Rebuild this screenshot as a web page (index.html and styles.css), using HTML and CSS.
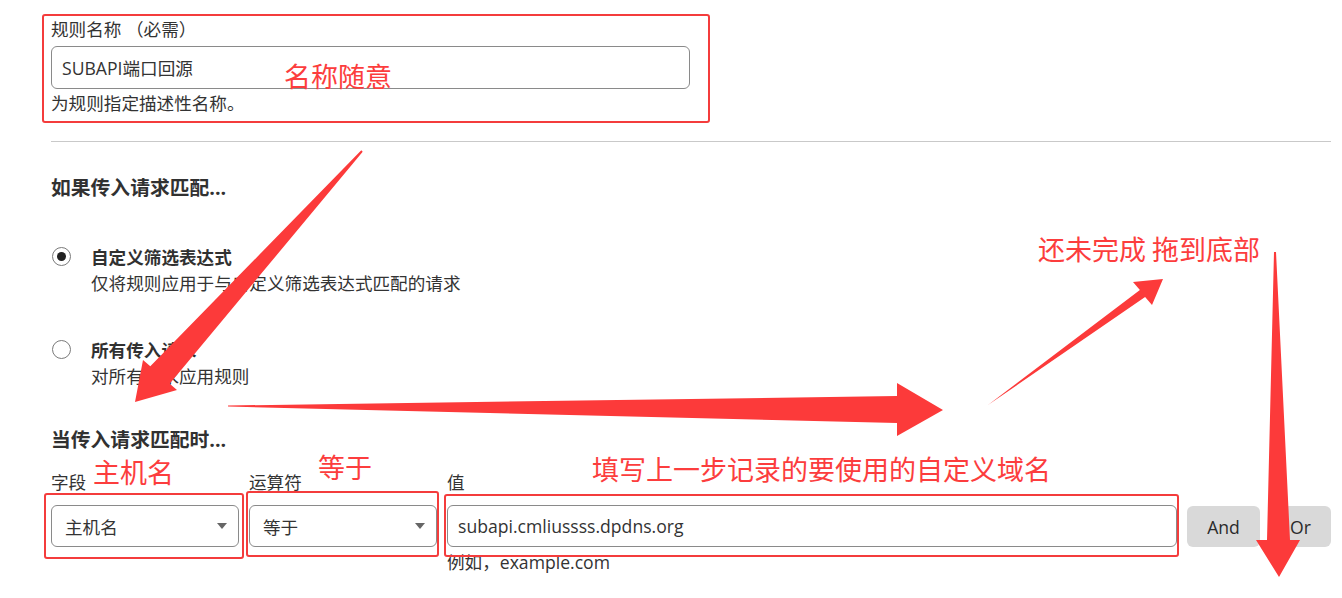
FILE: index.html
```html
<!DOCTYPE html>
<html lang="zh-CN">
<head>
<meta charset="utf-8">
<title>规则</title>
<link rel="stylesheet" href="styles.css">
</head>
<body>
<main class="page">
  <section class="name-field">
    <div class="label">规则名称 （必需）</div>
    <div class="text-input wide">SUBAPI端口回源</div>
    <p class="help">为规则指定描述性名称。</p>
  </section>
  <hr class="divider">
  <h3 class="heading h-match">如果传入请求匹配...</h3>
  <div class="radio-list">
    <div class="radio-item">
      <span class="radio checked"></span>
      <div class="radio-text">
        <div class="radio-title">自定义筛选表达式</div>
        <div class="radio-desc">仅将规则应用于与自定义筛选表达式匹配的请求</div>
      </div>
    </div>
    <div class="radio-item second">
      <span class="radio"></span>
      <div class="radio-text">
        <div class="radio-title">所有传入请求</div>
        <div class="radio-desc">对所有请求应用规则</div>
      </div>
    </div>
  </div>
  <h3 class="heading h-when">当传入请求匹配时...</h3>
  <div class="expr-grid">
    <div class="label">字段</div>
    <div class="label">运算符</div>
    <div class="label">值</div>
    <div></div>
    <div></div>
    <div class="select">主机名<span class="caret"></span></div>
    <div class="select">等于<span class="caret"></span></div>
    <div class="text-input value">subapi.cmliussss.dpdns.org</div>
    <div class="btn">And</div>
    <div class="btn">Or</div>
    <div></div>
    <div></div>
    <div class="help small-top">例如，example.com</div>
  </div>
</main>

<div class="annotations">
  <div class="mark mark-name"></div>
  <div class="mark mark-field"></div>
  <div class="mark mark-op"></div>
  <div class="mark mark-value"></div>
  <svg class="arrows" width="1342" height="598" viewBox="0 0 1342 598">
    <polygon points="362.7,151.7 169.7,383.7 177,390 135,402 143,360 150.3,366.3 361.3,150.3"/>
    <polygon points="228,405.5 897,396 897,383 943,410 897,436 897,423 228,406.5"/>
    <polygon points="988,405 1139.9,289.9 1133,282 1163,279 1152,305 1145.1,297.1"/>
    <polygon points="1274,252 1276,252 1290,540 1300,540 1279,577 1256,540 1267,540"/>
  </svg>
  <div class="note note-name">名称随意</div>
  <div class="note note-host">主机名</div>
  <div class="note note-eq">等于</div>
  <div class="note note-domain">填写上一步记录的要使用的自定义域名</div>
  <div class="note note-todo">还未完成 拖到底部</div>
</div>
</body>
</html>
```

FILE: styles.css
```css
* { box-sizing: border-box; }

body {
  margin: 0;
  background: #ffffff;
  font-family: "Open Sans", "Noto Sans CJK SC", sans-serif;
  font-size: 17.6px;
  color: #333333;
}

.page {
  padding: 17px 11px 0 51px;
}

.label {
  line-height: 24px;
  height: 24px;
  white-space: nowrap;
}

.text-input {
  height: 43px;
  margin-top: 5px;
  border: 1px solid #8a8a8a;
  border-radius: 6px;
  padding: 0 10px;
  display: flex;
  align-items: center;
  white-space: nowrap;
}

.wide { width: 639px; }

.help {
  margin: 2px 0 0;
  line-height: 24px;
  white-space: nowrap;
}

.divider {
  margin: 26px 0 0;
  border: 0;
  border-top: 1px solid #c9c9c9;
  height: 0;
}

.heading {
  margin: 0;
  font-size: 19.8px;
  font-weight: 700;
  line-height: 24px;
  color: #313131;
}

.h-match { margin-top: 34px; }
.h-when { margin-top: 39px; }

.radio-list { margin-top: 44px; }

.radio-item {
  display: flex;
  gap: 20px;
  line-height: 26px;
  padding-left: 1px;
}

.radio-item.second { margin-top: 41px; }

.radio {
  width: 19px;
  height: 19px;
  margin-top: 3px;
  border: 1px solid #7a7a7a;
  border-radius: 50%;
  display: flex;
  align-items: center;
  justify-content: center;
  flex: none;
  background: #fff;
}

.radio.checked::after {
  content: "";
  width: 9px;
  height: 9px;
  border-radius: 50%;
  background: #222;
}

.radio-title {
  font-weight: 700;
  color: #313131;
}

.expr-grid {
  margin-top: 18px;
  display: grid;
  grid-template-columns: 188px 188px 1fr 73px 61px;
  column-gap: 10px;
}

.select {
  margin-top: 11px;
  height: 42px;
  border: 1px solid #8a8a8a;
  border-radius: 6px;
  padding: 0 11px 0 13px;
  display: flex;
  align-items: center;
  justify-content: space-between;
}

.caret {
  width: 0;
  height: 0;
  border-left: 5.5px solid transparent;
  border-right: 5.5px solid transparent;
  border-top: 6px solid #666;
}

.text-input.value {
  margin-top: 11px;
  height: 42px;
}

.btn {
  margin-top: 12px;
  height: 41px;
  background: #d9d9d9;
  border-radius: 6px;
  display: flex;
  align-items: center;
  justify-content: center;
  color: #2b2b2b;
}

.small-top { margin-top: 3px; }

/* annotation layer drawn over the screenshot */
.annotations {
  position: absolute;
  left: 0;
  top: 0;
  width: 1342px;
  height: 598px;
  pointer-events: none;
}

.arrows {
  position: absolute;
  left: 0;
  top: 0;
}

.arrows polygon { fill: #fc3a3a; }

.mark {
  position: absolute;
  border: 2px solid #f43c3c;
  border-radius: 3px;
}

.mark-name { left: 42px; top: 14px; width: 668px; height: 109px; }
.mark-field { left: 44px; top: 493px; width: 200px; height: 66px; }
.mark-op { left: 246px; top: 491px; width: 193px; height: 66px; }
.mark-value { left: 444px; top: 494px; width: 735px; height: 63px; }

.note {
  position: absolute;
  color: #fc3d3d;
  font-family: "Noto Sans CJK SC", sans-serif;
  font-size: 27px;
  line-height: 1;
  white-space: nowrap;
}

.note-name { left: 284px; top: 62px; }
.note-host { left: 93px; top: 458px; }
.note-eq { left: 318px; top: 453px; }
.note-domain { left: 592px; top: 455px; }
.note-todo { left: 1038px; top: 235px; }
```
